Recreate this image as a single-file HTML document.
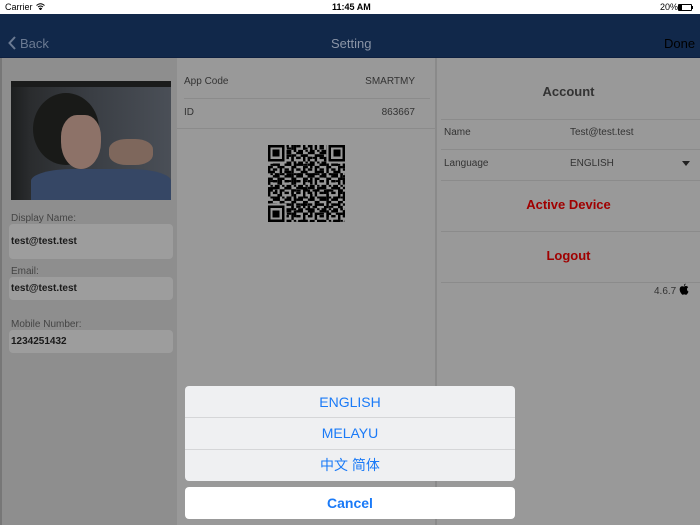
<!DOCTYPE html>
<html><head><meta charset="utf-8"><style>
*{margin:0;padding:0;box-sizing:border-box}
body{width:700px;height:525px;overflow:hidden;position:relative;font-family:"Liberation Sans","Noto Sans CJK SC",sans-serif;background:#8e8e8e}
.abs{position:absolute}
.status{left:0;top:0;width:700px;height:14px;background:#fff;font-size:9px;color:#000}
.nav{left:0;top:14px;width:700px;height:44px;background:#11284a;border-bottom:1px solid #0e2040}
.left{left:0;top:58px;width:177px;height:467px;background:#8e8e8e;border-left:2px solid #777}
.mid{left:177px;top:58px;width:258px;height:467px;background:#999}
.right{left:437px;top:58px;width:263px;height:467px;background:#999}
.lbl{font-size:10px;color:#444;left:11px}
.fld{left:7px;width:164px;background:#9d9d9d;border-radius:4px;font-size:10px;font-weight:bold;color:#1a1a1a;padding-left:2px;display:flex;align-items:center}
.row{font-size:10px;color:#333}
.line{height:1px;background:#8b8b8b}
.sheet{background:#eff0f2;color:#1a7af7;font-size:14px;text-align:center}
</style></head><body>
<div class="abs status">
 <span class="abs" style="left:5px;top:2px">Carrier</span>
 <svg class="abs" style="left:36px;top:3px" width="9" height="7" viewBox="0 0 9 7"><path d="M0.5 2.5Q4.5-1 8.5 2.5M2 4Q4.5 2 7 4M3.5 5.5L4.5 6.8L5.5 5.5Q4.5 4.8 3.5 5.5Z" fill="none" stroke="#000" stroke-width="1"/></svg>
 <span class="abs" style="left:332px;top:2px;font-weight:bold">11:45 AM</span>
 <span class="abs" style="left:660px;top:2px">20%</span>
 <div class="abs" style="left:678px;top:4px;width:14px;height:7px;border:1px solid #000;border-radius:1px"><div style="width:3px;height:5px;background:#000"></div></div>
 <div class="abs" style="left:692px;top:6px;width:1px;height:3px;background:#000"></div>
</div>
<div class="abs nav">
 <svg class="abs" style="left:8px;top:22px" width="8" height="14" viewBox="0 0 8 14"><path d="M7 1L1.5 7L7 13" fill="none" stroke="#6b7a92" stroke-width="2"/></svg>
 <span class="abs" style="left:20px;top:22px;font-size:13px;color:#6b7a92">Back</span>
 <span class="abs" style="left:331px;top:22px;font-size:13px;color:#8a94a6">Setting</span>
 <span class="abs" style="left:664px;top:22px;font-size:13px;color:#000">Done</span>
</div>
<div class="abs left">
 <div class="abs" style="left:9px;top:23px;width:160px;height:119px;background:linear-gradient(90deg,#1c1e1f 0%,#2a2c2e 12%,#3a3e44 50%,#4a4f57 100%);overflow:hidden">
  <div class="abs" style="left:0;top:0;width:160px;height:6px;background:#1a1b1b"></div>
  <div class="abs" style="left:22px;top:12px;width:66px;height:72px;border-radius:50%;background:#191a18"></div>
  <div class="abs" style="left:50px;top:34px;width:40px;height:54px;border-radius:40% 40% 50% 50%;background:#8d7268"></div>
  <div class="abs" style="left:98px;top:58px;width:44px;height:26px;border-radius:40%;background:#7e675c"></div>
  <div class="abs" style="left:20px;top:88px;width:140px;height:40px;border-radius:30% 30% 0 0;background:#364765"></div>
 </div>
 <div class="abs lbl" style="top:155px;left:9px">Display Name:</div>
 <div class="abs fld" style="top:166px;height:35px">test@test.test</div>
 <div class="abs lbl" style="top:208px;left:9px">Email:</div>
 <div class="abs fld" style="top:219px;height:23px">test@test.test</div>
 <div class="abs lbl" style="top:261px;left:9px">Mobile Number:</div>
 <div class="abs fld" style="top:272px;height:23px">1234251432</div>
</div>
<div class="abs mid">
 <div class="abs row" style="left:7px;top:18px">App Code</div>
 <div class="abs row" style="right:20px;top:18px">SMARTMY</div>
 <div class="abs line" style="left:7px;top:40px;width:246px"></div>
 <div class="abs row" style="left:7px;top:49px">ID</div>
 <div class="abs row" style="right:20px;top:49px">863667</div>
 <div class="abs line" style="left:0;top:70px;width:258px"></div>
 <svg class="abs" style="left:91px;top:87px" width="77" height="77" viewBox="0 0 33 33" shape-rendering="crispEdges">
  <defs><pattern id="p" width="5" height="5" patternUnits="userSpaceOnUse">
   <rect x="0" y="0" width="1" height="2" fill="#000"/><rect x="2" y="0" width="2" height="1" fill="#000"/><rect x="1" y="2" width="1" height="1" fill="#000"/><rect x="3" y="2" width="2" height="2" fill="#000"/><rect x="0" y="4" width="2" height="1" fill="#000"/><rect x="2" y="3" width="1" height="1" fill="#000"/>
  </pattern>
  <pattern id="q" width="7" height="7" patternUnits="userSpaceOnUse">
   <rect x="1" y="1" width="2" height="1" fill="#000"/><rect x="4" y="0" width="1" height="3" fill="#000"/><rect x="0" y="4" width="3" height="1" fill="#000"/><rect x="5" y="5" width="2" height="1" fill="#000"/><rect x="3" y="5" width="1" height="2" fill="#000"/>
  </pattern></defs>
  <rect width="33" height="33" fill="url(#p)"/><rect width="33" height="33" fill="url(#q)"/>
  <g fill="#999"><rect width="8" height="8"/><rect x="25" width="8" height="8"/><rect y="25" width="8" height="8"/></g>
  <g fill="none" stroke="#000"><rect x="0.5" y="0.5" width="6" height="6"/><rect x="26.5" y="0.5" width="6" height="6"/><rect x="0.5" y="26.5" width="6" height="6"/></g>
  <g fill="#000"><rect x="2" y="2" width="3" height="3"/><rect x="28" y="2" width="3" height="3"/><rect x="2" y="28" width="3" height="3"/></g>
 </svg>
</div>
<div class="abs" style="left:435px;top:58px;width:2px;height:467px;background:#8a8a8a"></div>
<div class="abs right">
 <div class="abs" style="left:0;width:263px;top:26px;text-align:center;font-size:13px;font-weight:bold;color:#333">Account</div>
 <div class="abs line" style="left:4px;top:61px;width:259px"></div>
 <div class="abs row" style="left:7px;top:69px">Name</div>
 <div class="abs row" style="left:133px;top:69px">Test@test.test</div>
 <div class="abs line" style="left:4px;top:91px;width:259px"></div>
 <div class="abs row" style="left:7px;top:100px">Language</div>
 <div class="abs row" style="left:133px;top:100px">ENGLISH</div>
 <svg class="abs" style="left:245px;top:103px" width="8" height="5"><path d="M0 0H8L4 5Z" fill="#222"/></svg>
 <div class="abs line" style="left:4px;top:122px;width:259px"></div>
 <div class="abs" style="left:0;width:263px;top:139px;text-align:center;font-size:13px;font-weight:bold;color:#a00000">Active Device</div>
 <div class="abs line" style="left:4px;top:173px;width:259px"></div>
 <div class="abs" style="left:0;width:263px;top:190px;text-align:center;font-size:13px;font-weight:bold;color:#a00000">Logout</div>
 <div class="abs line" style="left:4px;top:224px;width:259px"></div>
 <div class="abs row" style="left:217px;top:228px">4.6.7</div>
 <svg class="abs" style="left:242px;top:225px" width="10" height="12" viewBox="0 0 10 12"><path d="M6.5 0.5Q6.5 2.3 5 3Q4.8 1.3 6.5 0.5ZM5 3.6Q6 3 7 3Q8.4 3 9.2 4.2Q7.8 5 8 6.6Q8.2 8 9.5 8.6Q9 10 8 11.2Q7.3 12 6.4 11.6Q5.6 11.2 4.9 11.4Q4 11.9 3.4 11.7Q2.5 11.2 1.5 9.4Q0.3 7 0.8 5.2Q1.4 3.2 3.2 3.2Q4.2 3.3 5 3.6Z" fill="#000"/></svg>
</div>
<div class="abs sheet" style="left:185px;top:386px;width:330px;height:95px;border-radius:4px;overflow:hidden">
 <div style="height:32px;line-height:32px;border-bottom:1px solid #d5d6d8">ENGLISH</div>
 <div style="height:32px;line-height:31px;border-bottom:1px solid #d5d6d8">MELAYU</div>
 <div style="height:31px;line-height:31px">中文 简体</div>
</div>
<div class="abs sheet" style="left:185px;top:487px;width:330px;height:32px;line-height:33px;border-radius:4px;background:#fff;font-weight:bold">Cancel</div>
</body></html>
